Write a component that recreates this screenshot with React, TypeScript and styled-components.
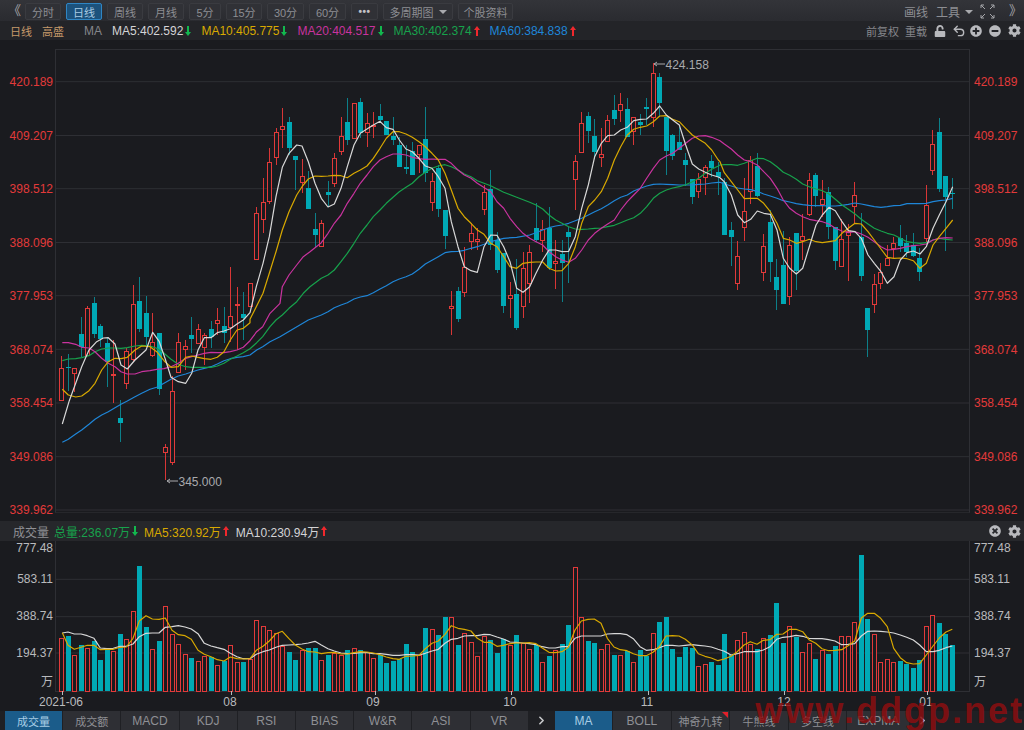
import React from 'react';
import styled, { createGlobalStyle } from 'styled-components';
import { ChevronRight, Undo2 } from 'lucide-react';
import { FaCog, FaMinusCircle, FaPlusCircle, FaTimesCircle, FaUnlock } from 'react-icons/fa';

const UP = '#e23a3a';
const DOWN = '#00a9b5';
const BG = '#1a1b1f';
const GRID = '#2e2f34';
const FONT = '"Liberation Sans", "Noto Sans CJK SC", sans-serif';

// chart numbers were read from enlarged crops, so they stay in crop coordinates (3x, with an origin)
type Crop = { ox: number; oy: number; pts: number[] };
const toPoints = (crops: Crop[]) =>
  crops
    .map(c => {
      const out: string[] = [];
      for (let i = 0; i < c.pts.length; i += 2) {
        out.push(`${(c.ox + c.pts[i] / 3).toFixed(1)},${(c.oy + c.pts[i + 1] / 3).toFixed(1)}`);
      }
      return out.join(' ');
    })
    .join(' ');

const Z6 = { ox: 40, oy: 270 };
const Z7 = { ox: 240, oy: 80 };
const Z8 = { ox: 480, oy: 50 };
const Z9 = { ox: 720, oy: 100 };

const MA5 = toPoints([
  { ...Z6, pts: [67,462,88,392,107,340,125,290,147,240,170,215,190,204,205,203,225,222,243,285,262,297,285,270,318,240,338,187,358,215,375,265,393,322,415,335,437,340,455,310,474,240,493,203,513,203,532,188,552,183,571,176,591,162,610,150,630,128] },
  { ...Z7, pts: [49,620,69,550,88,470,108,350,127,262,147,220,170,195,186,198,205,245,225,310,244,355,264,381,283,372,303,325,322,260,342,195,361,160,381,147,400,135,420,124,439,143,459,148,478,180,498,207,517,215,537,235,556,258,576,265,595,290,615,325,634,425,654,500,673,560,693,572,712,577] },
  { ...Z8, pts: [12,590,32,555,51,556,71,590,90,635,110,715,129,727,149,710,168,670,188,630,207,600,227,600,246,605,266,604,286,560,305,475,325,405,344,320,364,280,383,257,403,255,422,240,442,232,461,212,481,208,500,207,520,190,539,168,559,195,578,210,598,225,617,285,637,342,656,357,676,367,695,375,715,381] },
  { ...Z9, pts: [0,233,13,245,34,285,53,345,73,368,92,358,112,333,131,340,151,343,171,390,190,475,209,505,229,522,248,505,268,440,288,375,307,345,327,322,346,332,366,365,385,392,405,395,424,415,444,465,463,490,483,515,502,550,522,530,541,480,561,458,580,453,600,462,619,440,639,385,658,345,678,305,698,260] },
]);
const MA10 = toPoints([
  { ...Z6, pts: [67,358,85,375,107,381,125,378,147,362,165,340,185,300,205,275,225,265,243,266,262,262,285,240,305,228,330,230,350,245,372,272,393,292,415,290,437,262,455,258,474,262,493,266,513,268,532,262,552,245,571,210,591,180,610,175,630,158] },
  { ...Z7, pts: [30,718,69,640,88,580,108,515,127,450,147,395,170,345,186,320,205,297,225,288,244,289,264,288,283,286,303,287,322,293,342,280,361,270,381,258,400,235,420,205,439,175,459,155,478,155,498,162,517,172,537,185,556,200,576,220,595,240,615,280,634,330,654,385,673,410,693,430,712,450] },
  { ...Z8, pts: [12,553,32,580,51,590,71,620,90,650,110,655,129,640,149,637,168,636,188,636,207,655,227,663,246,662,266,640,286,590,305,520,325,470,344,450,364,425,383,385,403,330,422,290,442,255,461,238,481,232,500,228,520,215,539,198,559,197,578,208,598,215,617,235,637,255,656,268,676,280,695,300,715,330] },
  { ...Z9, pts: [0,185,13,218,34,245,53,270,73,296,92,295,112,295,131,310,151,335,171,370,190,415,209,420,229,430,248,425,268,418,288,425,307,428,327,425,346,422,366,400,385,385,405,370,424,372,444,395,463,420,483,447,502,472,522,475,541,474,561,476,580,482,600,505,619,490,639,435,658,410,678,385,698,360] },
]);
const MA20 = toPoints([
  { ...Z6, pts: [67,218,85,218,107,223,125,232,147,234,165,245,185,265,205,280,225,290,243,305,262,312,285,312,305,305,330,302,350,298,372,296,393,290,415,280,437,265,455,260,474,255,493,250,513,247,532,248,552,248,571,245,591,240,610,232,630,212,650,185,668,170,690,130,720,100] },
  { ...Z7, pts: [127,620,147,585,170,555,190,530,210,515,244,488,264,460,283,430,303,405,322,370,342,340,361,310,381,285,400,260,420,240,439,230,459,222,478,222,498,225,517,232,537,236,556,238,576,237,595,238,615,238,634,250,654,270,673,285,693,295,712,310] },
  { ...Z8, pts: [32,425,51,455,71,475,90,505,110,530,129,550,149,565,168,575,188,585,207,605,227,620,246,630,266,637,286,625,305,600,325,570,344,550,364,535,383,522,403,510,422,480,442,455,461,435,481,415,500,385,520,355,539,330,559,318,578,310,598,295,617,280,637,265,656,258,676,257,695,262,715,270] },
  { ...Z9, pts: [0,122,13,132,34,147,53,165,73,180,92,185,112,195,131,215,151,235,171,265,190,300,209,325,229,340,248,350,268,358,288,362,307,365,327,372,346,385,366,393,385,398,405,395,424,402,444,412,463,425,483,440,502,450,522,448,541,445,561,440,580,437,600,435,619,432,639,420,658,415,678,413,698,414] },
]);
const MA30 = toPoints([
  { ...Z6, pts: [67,272,85,267,107,266,125,263,147,257,165,245,185,237,205,234,225,234,243,235,262,233,285,228,305,226,330,228,350,235,372,250,393,268,415,283,437,290,455,292,474,292,493,292,513,292,532,288,552,280,571,268,591,258,610,248,630,236,650,218,668,200,690,170] },
  { ...Z7, pts: [108,720,127,705,147,685,170,665,190,640,210,620,244,595,264,585,283,570,303,545,322,520,342,490,361,460,381,435,400,410,420,390,439,370,459,352,478,335,498,322,517,310,537,290,556,277,576,265,595,258,615,254,634,260,654,270,673,282,693,290,712,302] },
  { ...Z8, pts: [32,407,71,427,110,442,149,457,168,465,188,477,207,495,227,510,246,520,266,530,286,537,305,538,325,537,344,535,364,534,383,530,403,526,422,518,442,510,461,503,481,490,500,470,520,445,539,430,559,420,578,414,598,410,617,404,637,395,656,385,676,370,695,358,715,348] },
  { ...Z9, pts: [0,195,13,194,34,194,53,196,73,190,92,182,112,175,131,176,151,185,171,200,190,217,209,226,229,238,248,252,268,260,288,267,307,272,327,282,346,298,366,315,385,328,405,342,424,358,444,372,463,385,483,393,502,400,522,405,541,415,561,425,580,428,600,430,619,428,639,420,658,415,678,418,698,420] },
]);
const MA60 = toPoints([
  { ...Z6, pts: [67,517,85,508,107,492,125,480,147,463,165,448,185,435,205,425,225,413,243,403,262,393,285,380,305,370,330,358,350,352,372,340,393,328,415,318,437,312,455,306,474,300,493,295,513,290,532,282,552,272,571,266,591,262,610,260,630,255,650,240,668,230,690,215,720,200] },
  { ...Z7, pts: [205,720,244,705,264,695,283,683,303,675,322,668,342,657,361,651,381,647,400,638,420,627,439,617,459,605,478,597,498,590,517,582,537,568,556,552,576,541,595,530,615,518,634,515,654,514,673,511,693,505,712,500] },
  { ...Z8, pts: [12,583,32,575,71,565,110,562,149,555,168,548,188,540,207,533,227,528,246,525,266,520,286,512,305,505,325,495,344,485,364,476,383,465,403,452,422,442,442,435,461,423,481,415,500,408,520,403,539,402,559,403,578,404,598,405,617,405,637,405,656,403,676,402,695,399,715,397] },
  { ...Z9, pts: [0,247,13,252,34,258,53,264,73,267,92,269,112,274,131,282,151,288,171,295,190,302,209,306,229,311,248,314,268,316,288,317,307,317,327,318,346,318,366,316,385,313,405,309,424,312,444,316,463,320,483,322,502,320,522,317,541,316,561,311,580,311,600,311,619,310,639,305,658,302,678,300,698,295] },
]);

const VOL_WHITE = toPoints([
  { ox: 40, oy: 540, pts: [67,279,84,276,103,282,123,282,142,287,162,295,181,324,201,326,220,325,240,319,259,319,279,312,298,290,318,280,337,279,357,279,376,262,396,260,415,257,435,261,454,267,474,281,493,310,513,318,532,323,552,328,571,340,591,350,610,356,630,356,649,343,669,335,688,330,708,322,727,316,747,315,766,314,786,312,805,309,825,304,844,315,864,326,883,333,903,339,922,341,942,340,961,338,981,338,1000,341,1020,341,1039,343,1059,346,1078,346,1098,344,1117,344,1137,345,1156,340,1176,333,1195,328,1215,310,1234,298,1254,295,1273,288,1293,287,1312,287,1332,283,1351,284,1371,291] },
  { ox: 500, oy: 540, pts: [10,297,30,306,49,307,69,309,88,311,108,314,127,320,147,324,166,324,186,320,205,320,225,295,244,288,264,288,283,288,303,288,322,282,342,281,361,281,381,284,400,296,420,320,439,331,459,329,478,323,498,316,517,316,537,318,556,316,576,314,595,316,615,318,634,321,654,328,673,334,693,345,712,341,732,335,751,335,771,335,790,330,810,320,830,298,849,292,869,290,888,286,908,289,927,295,947,296,966,296,986,299,1005,303,1025,314,1044,313,1064,311,1084,288,1103,274,1123,273,1142,274,1162,276,1181,279,1201,285,1220,292,1240,300,1259,315,1279,335,1299,335,1318,331,1338,323,1357,318] },
]);
const VOL_YELLOW = toPoints([
  { ox: 40, oy: 540, pts: [67,278,84,316,103,328,123,322,142,316,162,316,181,329,201,328,220,328,240,322,259,321,279,295,298,243,318,227,337,237,357,238,376,234,396,271,415,284,435,287,454,298,474,331,493,343,513,350,532,359,552,363,571,351,591,356,610,357,630,356,649,331,669,319,688,303,708,281,727,274,747,296,766,315,786,327,805,335,825,336,844,341,864,338,883,337,903,342,922,342,942,338,961,335,981,336,1000,339,1020,344,1039,351,1059,356,1078,358,1098,349,1117,348,1137,346,1156,326,1176,310,1195,303,1215,283,1234,257,1254,265,1273,268,1293,273,1312,295,1332,307,1351,307,1371,319] },
  { ox: 500, oy: 540, pts: [10,316,30,311,49,309,69,309,88,308,108,311,127,324,147,337,166,338,186,335,205,322,225,270,244,243,264,238,283,237,303,250,322,295,342,321,361,329,381,332,400,341,420,347,439,347,459,337,478,320,498,288,517,287,537,288,556,298,576,314,595,341,615,349,634,354,654,362,673,357,693,349,712,335,732,315,751,305,771,313,790,301,810,299,830,283,849,282,869,268,888,268,908,275,927,299,947,310,966,326,986,332,1005,331,1025,329,1044,317,1064,303,1084,234,1103,220,1123,220,1142,235,1162,260,1181,325,1201,353,1220,368,1240,372,1259,371,1279,345,1299,318,1318,294,1338,276,1357,268] },
]);

// bar tops in crop y, 'u' = red, 'd' = teal; the candle of the same day has the same colour
const VOL: [number, 'u' | 'd'][] = [
  [295,'u'],[289,'d'],[346,'u'],[315,'d'],[323,'u'],[304,'d'],[359,'d'],[327,'d'],[333,'u'],[281,'d'],
  [298,'u'],[214,'u'],[77,'d'],[262,'d'],[326,'u'],[303,'d'],[198,'u'],[282,'u'],[313,'u'],[342,'u'],
  [353,'d'],[362,'u'],[348,'u'],[352,'d'],[376,'u'],[362,'d'],[315,'u'],[365,'u'],[367,'d'],[358,'u'],
  [240,'u'],[259,'u'],[270,'u'],[278,'u'],[318,'u'],[337,'d'],[359,'d'],[331,'u'],[325,'d'],[323,'d'],
  [360,'u'],[345,'d'],[338,'u'],[345,'u'],[331,'d'],[325,'u'],[331,'d'],[337,'u'],[354,'u'],[344,'d'],
  [370,'d'],[362,'d'],[358,'d'],[312,'d'],[337,'d'],[346,'u'],[264,'d'],[268,'u'],[284,'d'],[231,'d'],
  [231,'u'],[315,'d'],[279,'u'],[307,'u'],[348,'u'],[289,'u'],[301,'d'],[339,'d'],[298,'d'],[315,'u'],
  [284,'d'],[310,'u'],[328,'u'],[315,'d'],[367,'u'],[347,'d'],[331,'u'],[312,'d'],[256,'d'],[81,'u'],
  [231,'u'],[303,'d'],[309,'d'],[326,'u'],[313,'u'],[345,'d'],[345,'u'],[333,'d'],[367,'u'],[331,'d'],
  [347,'d'],[279,'u'],[247,'d'],[231,'d'],[328,'d'],[351,'d'],[320,'d'],[323,'d'],[379,'u'],[373,'u'],
  [367,'d'],[375,'d'],[281,'d'],[345,'d'],[301,'u'],[276,'u'],[313,'u'],[326,'d'],[295,'u'],[284,'d'],
  [189,'d'],[309,'d'],[259,'u'],[290,'d'],[337,'u'],[310,'u'],[356,'d'],[329,'u'],[342,'d'],[318,'d'],
  [289,'u'],[289,'u'],[245,'u'],[44,'d'],[237,'d'],[282,'u'],[365,'u'],[357,'u'],[367,'u'],[362,'d'],
  [373,'d'],[384,'d'],[360,'d'],[259,'u'],[226,'u'],[250,'d'],[282,'d'],[316,'d'],
];

// [body top, body bottom, high, low] in crop coordinates
const C6 = [[295,390,258,392],[290,294,252,362],[295,309,295,365],[193,230,140,262],[115,255,107,258],[98,192,82,205],[168,207,162,230],[220,275,205,350],[311,315,210,400],[445,460,390,515],[243,340,235,357],[101,268,45,275],[93,176,22,185],[130,200,78,225],[217,255,130,262],[190,358,190,374],[532,546,523,630],[362,575,318,586],[217,305,190,310],[227,237,210,300],[196,206,140,250],[178,220,163,222],[194,230,188,285],[177,202,152,235],[149,158,115,195],[167,190,110,220],[139,172,-10,215],[102,104,50,240],[132,145,65,210],[40,108,40,110]];
const C7 = [[398,538,380,540],[367,418,295,460],[245,362,203,372],[156,232,145,255],[139,148,85,205],[125,205,110,225],[228,240,228,330],[289,307,238,340],[325,386,272,386],[448,466,398,505],[429,497,420,500],[337,344,303,382],[234,310,220,322],[167,214,112,225],[125,180,55,194],[70,174,70,175],[66,160,55,175],[130,155,100,200],[134,138,95,175],[108,120,72,125],[123,165,123,165],[168,180,112,195],[194,260,170,262],[262,267,195,282],[214,285,185,285],[194,223,194,278],[178,280,80,305],[304,365,278,392],[263,386,255,412],[389,468,389,506],[677,684,632,765],[632,716,622,725],[560,637,500,650],[460,482,430,510],[477,484,445,510]];
const C8 = [[427,478,405,495],[418,585,360,600],[570,660,545,670],[610,768,610,790],[736,745,695,803],[733,835,628,840],[655,768,605,805],[607,698,585,760],[533,570,458,575],[536,570,510,605],[533,653,472,660],[633,640,570,718],[611,638,570,757],[546,562,530,698],[333,388,316,480],[218,305,187,308],[198,244,186,280],[259,305,208,328],[311,322,235,352],[209,274,195,275],[181,206,135,225],[163,179,128,217],[176,262,145,262],[201,244,201,285],[215,226,193,255],[170,177,145,225],[70,200,40,230],[81,158,70,200],[200,303,200,375],[255,318,253,330],[277,300,230,300],[331,344,310,407],[388,440,388,463],[388,422,370,445],[350,380,345,435],[333,355,315,380],[366,380,335,435]];
const C9 = [[245,406,235,406],[391,410,365,497],[469,548,423,570],[333,382,235,423],[180,272,168,312],[198,288,160,290],[439,515,402,544],[366,485,330,547],[531,571,477,630],[495,613,393,613],[435,587,410,616],[400,514,400,570],[408,421,343,480],[241,342,218,348],[224,288,220,320],[297,311,240,350],[275,380,260,418],[380,482,380,510],[416,498,358,500],[393,405,373,543],[284,319,246,370],[410,527,340,543],[625,691,625,770],[551,612,523,638],[517,548,490,566],[475,495,435,497],[428,445,410,475],[415,438,376,455],[428,457,405,470],[435,468,400,470],[475,515,445,542],[316,415,255,425],[133,211,90,226],[96,267,54,275],[229,292,229,452],[279,281,235,326]];

const CANDLES = [
  ...C6.map(c => ({ c, oy: 270 })),
  ...C7.map(c => ({ c, oy: 80 })),
  ...C8.map(c => ({ c, oy: 50 })),
  ...C9.map(c => ({ c, oy: 100 })),
];

const barX = (i: number) => 61.3 + 6.5 * i;

const GlobalStyle = createGlobalStyle`
  html, body { margin: 0; padding: 0; background: ${BG}; }
  body { font-family: ${FONT}; font-size: 12px; }
`;

const Page = styled.div`
  position: relative;
  width: 1024px;
  height: 730px;
  overflow: hidden;
  display: flex;
  flex-direction: column;
  background: ${BG};
`;

const Toolbar = styled.div`
  height: 21px;
  box-sizing: border-box;
  padding: 3px 3px 0 9px;
  display: flex;
  align-items: flex-start;
  gap: 5px;
  font-size: 11px;
  background: linear-gradient(#333439, #2a2b30);
`;

const Chevron = styled.span<{ $ml?: number }>`
  width: 11px;
  margin-left: ${p => p.$ml ?? 0}px;
  height: 17px;
  line-height: 16px;
  font-size: 13px;
  color: #a6a7ab;
  display: flex;
  justify-content: center;
`;

const PeriodButton = styled.div<{ $w: number; $active?: boolean }>`
  width: ${p => p.$w}px;
  height: 17px;
  box-sizing: border-box;
  display: flex;
  align-items: center;
  justify-content: center;
  gap: 5px;
  border: 1px solid ${p => (p.$active ? '#2f86c4' : '#3a3b40')};
  border-radius: 2px;
  background: ${p => (p.$active ? '#1c527c' : '#303136')};
  color: ${p => (p.$active ? '#a9cbe3' : '#8d8e93')};
`;

const Caret = styled.span`
  width: 0;
  height: 0;
  border-left: 4px solid transparent;
  border-right: 4px solid transparent;
  border-top: 4px solid #a8a9ad;
`;

const Dots = styled.span`
  color: #c2c3c7;
  font-weight: bold;
  font-size: 10px;
  letter-spacing: 0.5px;
`;

const ToolbarRight = styled.div`
  margin-left: auto;
  display: flex;
  align-items: center;
  height: 17px;
  font-size: 12px;
  color: #8d8e93;
`;

const ToolLabel = styled.span<{ $ml?: number }>`
  margin-left: ${p => p.$ml ?? 0}px;
`;

const LegendRow = styled.div`
  height: 19px;
  padding: 0 3px 0 10px;
  display: flex;
  align-items: center;
  gap: 10px;
  background: #232428;
`;

const LegendText = styled.span<{ $color: string; $ml?: number; $small?: boolean }>`
  margin-left: ${p => p.$ml ?? 0}px;
  color: ${p => p.$color};
  font-size: ${p => (p.$small ? 11 : 12)}px;
  white-space: nowrap;
  display: inline-flex;
  align-items: center;
  gap: 2px;
`;

const LegendRight = styled.div`
  margin-left: auto;
  display: flex;
  align-items: center;
  font-size: 11px;
  color: #85868b;
`;

const IconSlot = styled.span<{ $ml?: number }>`
  display: inline-flex;
  margin-left: ${p => p.$ml ?? 0}px;
  color: #b8b9bd;
`;

const Section = styled.div<{ $h: number }>`
  height: ${p => p.$h}px;
  display: flex;
`;

const PriceAxis = styled.div<{ $side: 'left' | 'right' }>`
  width: ${p => (p.$side === 'left' ? 53 : 50)}px;
  padding: ${p => (p.$side === 'left' ? '35px 2px 0 0' : '35px 0 0 4px')};
  display: flex;
  flex-direction: column;
  gap: 39.5px;
  color: #e23a3a;
  line-height: 14px;
  text-align: ${p => (p.$side === 'left' ? 'right' : 'left')};
`;

const PlotFrame = styled.div`
  margin-top: 9px;
  width: 915px;
  height: 464px;
  box-sizing: border-box;
  border: 1px solid ${GRID};
  border-bottom: 1px solid #26272b;
`;

const ChartSvg = styled.svg`
  display: block;
  overflow: visible;
`;

const VolumeHeader = styled.div`
  height: 20px;
  flex: none;
  padding: 0 3px 0 13px;
  display: flex;
  align-items: center;
  background: #26272b;
`;

const HeadItem = styled.span<{ $color: string; $ml: number }>`
  margin-left: ${p => p.$ml}px;
  color: ${p => p.$color};
  white-space: nowrap;
  display: inline-flex;
  align-items: center;
  gap: 2px;
`;

const VolumeAxis = styled.div<{ $side: 'left' | 'right' }>`
  width: ${p => (p.$side === 'left' ? 53 : 50)}px;
  padding: ${p => (p.$side === 'left' ? '0 2px 0 0' : '0 0 0 4px')};
  color: #b9babd;
  line-height: 14px;
  text-align: ${p => (p.$side === 'left' ? 'right' : 'left')};
`;

const VolumeTick = styled.div<{ $mt: number }>`
  margin-top: ${p => p.$mt}px;
`;

const VolumePlot = styled.div`
  width: 915px;
  height: 151px;
  box-sizing: border-box;
  border-left: 1px solid ${GRID};
  border-right: 1px solid ${GRID};
`;

const DateAxis = styled.div`
  height: 19px;
  flex: none;
  padding-left: 39px;
  display: flex;
  align-items: center;
  color: #b9babd;
`;

const DateLabel = styled.span<{ $ml: number }>`
  width: 44px;
  margin-left: ${p => p.$ml}px;
  text-align: center;
  white-space: nowrap;
`;

const TabBar = styled.div`
  height: 19px;
  flex: none;
  padding-left: 5px;
  display: flex;
  gap: 1px;
  background: #1f2024;
`;

const Tab = styled.div<{ $w?: number; $active?: boolean; $flag?: boolean; $cjk?: boolean }>`
  position: relative;
  width: ${p => p.$w ?? 57.2}px;
  display: flex;
  align-items: center;
  justify-content: center;
  background: ${p => (p.$active ? '#1b5c8a' : '#2e2f34')};
  color: ${p => (p.$active ? '#a8cde6' : '#8f9095')};
  font-size: ${p => (p.$cjk ? 11 : 12)}px;
  white-space: nowrap;
  ${p =>
    p.$flag &&
    `&::after {
      content: '';
      position: absolute;
      top: 1px;
      right: 1px;
      border-top: 6px solid #e3202a;
      border-left: 6px solid transparent;
    }`}
`;

const TabArrow = styled.span<{ $w: number }>`
  width: ${p => p.$w}px;
  display: flex;
  align-items: center;
  justify-content: center;
  color: #c6c7ca;
`;

const Watermark = styled.div`
  position: absolute;
  right: 0;
  bottom: -2px;
  font: bold 36px "Liberation Sans", sans-serif;
  letter-spacing: 2px;
  color: rgba(140, 14, 16, 0.85);
  white-space: nowrap;
`;

const Arrow = ({ up }: { up?: boolean }) => (
  <svg width="6" height="10" viewBox="0 0 6 10">
    {up ? (
      <path d="M3 0 L6 4 H4 V10 H2 V4 H0 Z" fill="#f0282d" />
    ) : (
      <path d="M3 10 L6 6 H4 V0 H2 V6 H0 Z" fill="#12b84e" />
    )}
  </svg>
);

const ExpandIcon = () => (
  <svg width="15" height="15" viewBox="0 0 15 15" fill="none" stroke="#a6a7ab" strokeWidth="1">
    <path d="M1 4V1H4M1 1L5 5M14 4V1H11M14 1L10 5M1 11V14H4M1 14L5 10M14 11V14H11M14 14L10 10" />
  </svg>
);

const PRICES = ['420.189', '409.207', '398.512', '388.096', '377.953', '368.074', '358.454', '349.086', '339.962'];
const PRICE_GRID = [81.7, 135.5, 188.7, 242.5, 295.7, 349.3, 403, 456.7, 510];
const VOLUME_TICKS: [string, number][] = [['777.48', 0], ['583.11', 17], ['388.74', 23], ['194.37', 23], ['万', 15]];
const PERIODS: [string, number][] = [['分时', 36], ['日线', 36], ['周线', 36], ['月线', 36], ['5分', 32], ['15分', 36], ['30分', 37], ['60分', 37]];
const LEFT_TABS = ['成交量', '成交额', 'MACD', 'KDJ', 'RSI', 'BIAS', 'W&R', 'ASI', 'VR'];
const RIGHT_TABS: [string, number][] = [['MA', 57.5], ['BOLL', 57.5], ['神奇九转', 57.5], ['牛熊线', 57.5], ['多空线', 57.5], ['EXPMA', 62]];
const DATES: [string, number][] = [['2021-06', 0], ['08', 125], ['09', 99], ['10', 93], ['11', 93], ['12', 93], ['01', 98]];
const DATE_TICKS = [62, 231, 375, 511, 648, 784, 927];

const isCjk = (t: string) => /[^\x00-\x7f]/.test(t);

const Line = ({ points, color, width = 1.2 }: { points: string; color: string; width?: number }) => (
  <polyline points={points} fill="none" stroke={color} strokeWidth={width} strokeLinejoin="round" />
);

const PriceNote = ({ x, y, label }: { x: number; y: number; label: string }) => (
  <g>
    <path d={`M${x} ${y}H${x + 11}M${x} ${y}l3 -2M${x} ${y}l3 2`} stroke="#a9aaad" fill="none" />
    <text x={x + 11.5} y={y + 4.5} fill="#a9aaad" fontSize="12">{label}</text>
  </g>
);

const KLine = () => (
  <ChartSvg width="913" height="463" viewBox="56 50 913 463">
    {PRICE_GRID.map(y => (
      <line key={y} x1="56" x2="969" y1={y} y2={y} stroke={GRID} />
    ))}
    {CANDLES.map(({ c, oy }, i) => {
      const up = VOL[i][1] === 'u';
      const x = Math.round(barX(i));
      const [top, bot, hi, lo] = c.map(v => Math.round(oy + v / 3));
      const color = up ? UP : DOWN;
      return (
        <g key={i}>
          <line x1={x + 0.5} x2={x + 0.5} y1={hi} y2={lo} stroke={up ? '#d83636' : '#0c7f89'} />
          {up ? (
            <rect x={x - 1.5} y={top + 0.5} width={4} height={Math.max(bot - top, 1)} fill={BG} stroke={color} />
          ) : (
            <rect x={x - 2} y={top} width={5} height={Math.max(bot - top, 1)} fill={color} />
          )}
        </g>
      );
    })}
    <Line points={MA60} color="#1f86d8" />
    <Line points={MA30} color="#17a24c" />
    <Line points={MA20} color="#c9339f" />
    <Line points={MA10} color="#d9a900" />
    <Line points={MA5} color="#d8d8d8" />
    <PriceNote x={654} y={64} label="424.158" />
    <PriceNote x={167} y={481} label="345.000" />
  </ChartSvg>
);

const VolumeBars = () => (
  <ChartSvg width="913" height="151" viewBox="56 541 913 151">
    {[579.3, 616.7, 653, 691.5].map(y => (
      <line key={y} x1="56" x2="969" y1={y} y2={y} stroke={GRID} />
    ))}
    {VOL.map(([top, dir], i) => {
      const x = Math.round(barX(i));
      const y = Math.round(540 + top / 3);
      return dir === 'u' ? (
        <rect key={i} x={x - 1.5} y={y + 0.5} width={4} height={691 - y} fill={BG} stroke={UP} />
      ) : (
        <rect key={i} x={x - 2} y={y} width={5} height={691 - y} fill={DOWN} />
      );
    })}
    {DATE_TICKS.map(x => (
      <line key={x} x1={x + 0.5} x2={x + 0.5} y1="691" y2="695" stroke="#b9babd" />
    ))}
    <Line points={VOL_WHITE} color="#d8d8d8" />
    <Line points={VOL_YELLOW} color="#d9a900" />
  </ChartSvg>
);

export default function App() {
  return (
    <Page>
      <GlobalStyle />
      <Toolbar>
        <Chevron>《</Chevron>
        {PERIODS.map(([label, w]) => (
          <PeriodButton key={label} $w={w} $active={label === '日线'}>{label}</PeriodButton>
        ))}
        <PeriodButton $w={27}><Dots>•••</Dots></PeriodButton>
        <PeriodButton $w={70}>多周期图<Caret /></PeriodButton>
        <PeriodButton $w={55}>个股资料</PeriodButton>
        <ToolbarRight>
          <ToolLabel>画线</ToolLabel>
          <ToolLabel $ml={8}>工具</ToolLabel>
          <IconSlot $ml={5}><Caret /></IconSlot>
          <IconSlot $ml={7}><ExpandIcon /></IconSlot>
          <Chevron $ml={15}>》</Chevron>
        </ToolbarRight>
      </Toolbar>

      <LegendRow>
        <LegendText $color="#c69a6b" $small>日线</LegendText>
        <LegendText $color="#c69a6b" $small>高盛</LegendText>
        <LegendText $color="#85868b" $ml={10}>MA</LegendText>
        <LegendText $color="#d4d4d6">MA5:402.592<Arrow /></LegendText>
        <LegendText $color="#d9a900">MA10:405.775<Arrow /></LegendText>
        <LegendText $color="#c9339f">MA20:404.517<Arrow /></LegendText>
        <LegendText $color="#17a24c">MA30:402.374<Arrow up /></LegendText>
        <LegendText $color="#1f86d8">MA60:384.838<Arrow up /></LegendText>
        <LegendRight>
          前复权
          <ToolLabel $ml={6}>重载</ToolLabel>
          <IconSlot $ml={7}><FaUnlock size={12} /></IconSlot>
          <IconSlot $ml={6}><Undo2 size={14} strokeWidth={2.4} /></IconSlot>
          <IconSlot $ml={4}><FaPlusCircle size={12} /></IconSlot>
          <IconSlot $ml={7}><FaMinusCircle size={12} /></IconSlot>
          <IconSlot $ml={7}><FaCog size={13} /></IconSlot>
        </LegendRight>
      </LegendRow>

      <Section $h={481}>
        <PriceAxis $side="left">
          {PRICES.map(p => <div key={p}>{p}</div>)}
        </PriceAxis>
        <PlotFrame><KLine /></PlotFrame>
        <PriceAxis $side="right">
          {PRICES.map(p => <div key={p}>{p}</div>)}
        </PriceAxis>
      </Section>

      <VolumeHeader>
        <HeadItem $color="#8f9095" $ml={0}>成交量</HeadItem>
        <HeadItem $color="#17a24c" $ml={5}>总量:236.07万<Arrow /></HeadItem>
        <HeadItem $color="#d9a900" $ml={6}>MA5:320.92万<Arrow up /></HeadItem>
        <HeadItem $color="#d4d4d6" $ml={7}>MA10:230.94万<Arrow up /></HeadItem>
        <LegendRight>
          <IconSlot><FaTimesCircle size={12} /></IconSlot>
          <IconSlot $ml={7}><FaCog size={13} /></IconSlot>
        </LegendRight>
      </VolumeHeader>

      <Section $h={151}>
        <VolumeAxis $side="left">
          {VOLUME_TICKS.map(([t, mt]) => <VolumeTick key={t} $mt={mt}>{t}</VolumeTick>)}
        </VolumeAxis>
        <VolumePlot><VolumeBars /></VolumePlot>
        <VolumeAxis $side="right">
          {VOLUME_TICKS.map(([t, mt]) => <VolumeTick key={t} $mt={mt}>{t}</VolumeTick>)}
        </VolumeAxis>
      </Section>

      <DateAxis>
        {DATES.map(([d, ml]) => <DateLabel key={d} $ml={ml}>{d}</DateLabel>)}
      </DateAxis>

      <TabBar>
        {LEFT_TABS.map((t, i) => <Tab key={t} $active={i === 0} $cjk={isCjk(t)}>{t}</Tab>)}
        <TabArrow $w={25}><ChevronRight size={13} strokeWidth={3} /></TabArrow>
        {RIGHT_TABS.map(([t, w], i) => <Tab key={t} $w={w} $active={i === 0} $flag={t === '神奇九转'} $cjk={isCjk(t)}>{t}</Tab>)}
        <TabArrow $w={24}><ChevronRight size={13} strokeWidth={3} /></TabArrow>
      </TabBar>

      <Watermark>www.ddgp.net</Watermark>
    </Page>
  );
}
